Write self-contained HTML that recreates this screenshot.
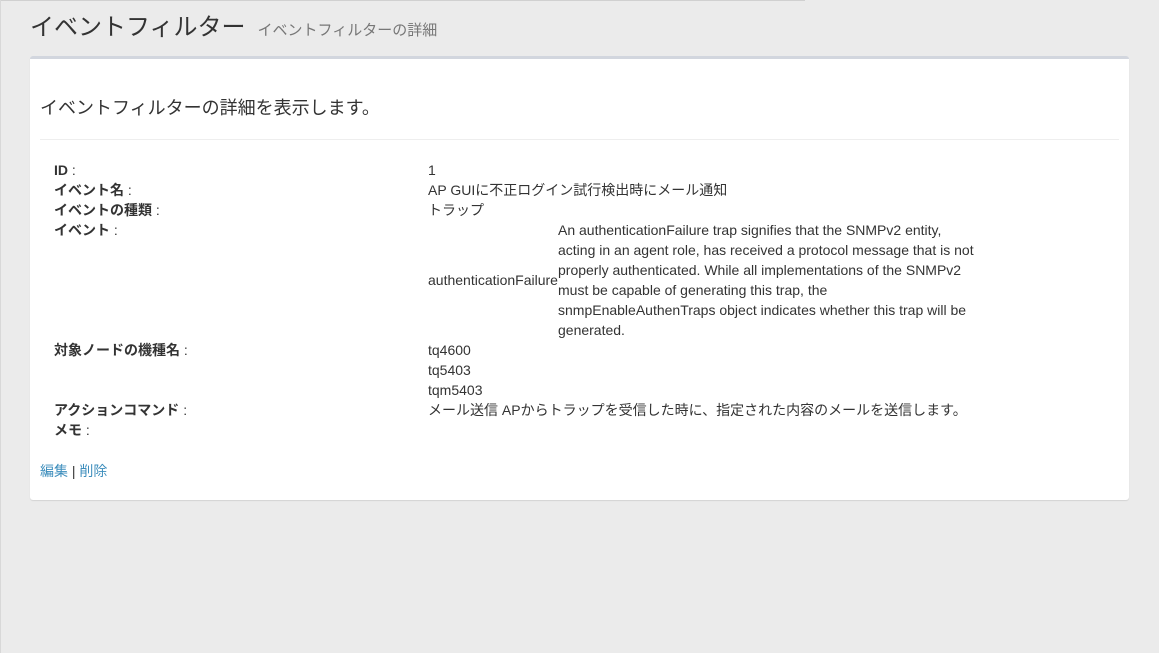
<!DOCTYPE html>
<html><head><meta charset="utf-8"><style>
body{margin:0;width:1159px;height:653px;background:#ebebeb;font-family:"Liberation Sans","Noto Sans CJK JP",sans-serif;color:#333;position:relative;overflow:hidden;font-size:14px}
.topline{position:absolute;left:0;top:0;width:805px;height:1px;background:#d0d0d0}
.leftline{position:absolute;left:0;top:0;width:1px;height:653px;background:#d8d8d8}
h1{position:absolute;left:30px;top:10px;margin:0;font-size:24px;font-weight:normal;color:#333;line-height:36px;white-space:nowrap}
h1 small{font-size:15px;color:#777;margin-left:12px}
.box{position:absolute;left:30px;top:56px;width:1099px;height:441px;background:#fff;border-top:3px solid #d2d6de;border-radius:3px;box-shadow:0 1px 1px rgba(0,0,0,.1)}
.lead{position:absolute;left:10px;top:37px;font-size:18px;line-height:24px}
.hr{position:absolute;left:10px;right:10px;top:80px;height:1px;background:#eee}
.row{position:absolute;left:24px;width:1060px;line-height:20px}
.l{position:absolute;left:0;font-weight:bold}
.l span{font-weight:normal}
.v{position:absolute;left:374px;white-space:nowrap}
.desc{position:absolute;left:504px;width:418px;line-height:20px}
a{color:#3c8dbc;text-decoration:none}
.links{position:absolute;left:10px;top:402px;line-height:20px}
</style></head><body>
<div class="topline"></div><div class="leftline"></div>
<h1>イベントフィルター<small>イベントフィルターの詳細</small></h1>
<div class="box">
<div class="lead">イベントフィルターの詳細を表示します。</div>
<div class="hr"></div>
<div class="row" style="top:101px"><div class="l">ID <span>:</span></div><div class="v">1</div></div>
<div class="row" style="top:121px"><div class="l">イベント名 <span>:</span></div><div class="v">AP GUIに不正ログイン試行検出時にメール通知</div></div>
<div class="row" style="top:141px"><div class="l">イベントの種類 <span>:</span></div><div class="v">トラップ</div></div>
<div class="row" style="top:161px"><div class="l">イベント <span>:</span></div><div class="v" style="top:50px">authenticationFailure</div>
<div class="desc">An authenticationFailure trap signifies that the SNMPv2 entity, acting in an agent role, has received a protocol message that is not properly authenticated. While all implementations of the SNMPv2 must be capable of generating this trap, the snmpEnableAuthenTraps object indicates whether this trap will be generated.</div></div>
<div class="row" style="top:281px"><div class="l">対象ノードの機種名 <span>:</span></div><div class="v">tq4600<br>tq5403<br>tqm5403</div></div>
<div class="row" style="top:341px"><div class="l">アクションコマンド <span>:</span></div><div class="v">メール送信 APからトラップを受信した時に、指定された内容のメールを送信します。</div></div>
<div class="row" style="top:361px"><div class="l">メモ <span>:</span></div></div>
<div class="links"><a>編集</a> | <a>削除</a></div>
</div>
</body></html>
